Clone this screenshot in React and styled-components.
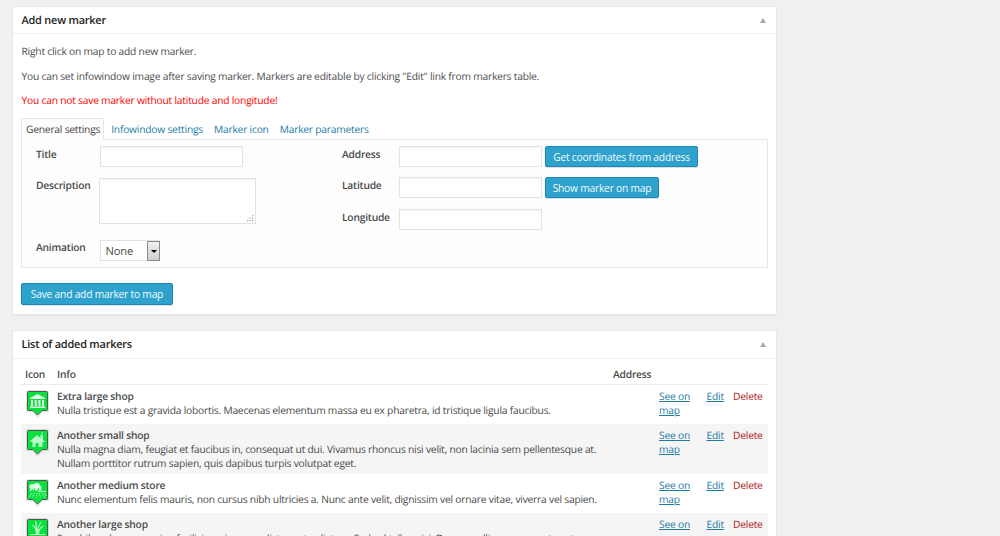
import React from "react";
import styled, { createGlobalStyle, css } from "styled-components";

const GlobalStyle = createGlobalStyle`
  html, body { margin: 0; height: 100%; overflow: hidden; }
  body {
    background: #f0f0f0;
    color: #4a4a4a;
    font: 10.25px/14px "Open Sans", sans-serif;
    letter-spacing: -0.216px;
    text-rendering: geometricPrecision;
  }
  *, *::before, *::after { box-sizing: border-box; }
`;

const Page = styled.main`
  display: flex;
  flex-direction: column;
  gap: 15px;
  width: 765px;
  height: 530px;
  overflow: hidden;
  margin: 6px 0 0 12px;
`;

const Panel = styled.section`
  flex: none;
  height: ${(p) => p.$height}px;
  background: #fff;
  border: 1px solid #e8e8e8;
  box-shadow: 0 1px 1px rgba(0, 0, 0, 0.03);
`;

const PanelHeader = styled.header`
  display: flex;
  align-items: center;
  justify-content: space-between;
  height: ${(p) => p.$height}px;
  padding: 0 10px 0 8.5px;
  border-bottom: 1px solid #f0f0f0;
`;

const PanelTitle = styled.h3`
  margin: 0;
  padding-top: 1px;
  color: #222;
  font-size: 10.95px;
  font-weight: 600;
`;

const Caret = styled.i`
  border: 3px solid transparent;
  border-top: 0;
  border-bottom: 5px solid #a6a6a6;
`;

const Intro = styled.div`
  display: flow-root;
  height: 84px;
  padding: 11px 8.5px 0;
`;

const Paragraph = styled.p`
  margin: 0 0 9.5px;
  line-height: 15px;
  color: ${(p) => (p.$warning ? "#f00" : "#4d4d4d")};
`;

const Tabs = styled.nav`
  display: flex;
  margin-left: 8px;
  height: 21px;
`;

const Tab = styled.a`
  padding: 4px 3px 0;
  margin-right: 3px;
  line-height: 14px;
  color: #1e7ba5;
  border: 1px solid transparent;
  border-bottom: 0;
  ${(p) =>
    p.$active &&
    css`
      padding-left: 4px;
      color: #444;
      background: #fdfdfd;
      border-color: #e5e5e5;
      margin-bottom: -1px;
      z-index: 1;
    `}
`;

const TabPanel = styled.div`
  display: grid;
  grid-template-columns: 306px 1fr;
  width: 747px;
  height: 129px;
  margin-left: 8px;
  padding: 6px 0 0 14px;
  background: #fdfdfd;
  border: 1px solid #e7e7e7;
`;

const Fields = styled.div`
  display: flex;
  flex-direction: column;
`;

const Field = styled.div`
  display: grid;
  grid-template-columns: ${(p) => p.$label}px auto auto;
  justify-content: start;
  align-items: start;
  height: ${(p) => p.$height}px;
`;

const Label = styled.label`
  padding-top: 2px;
  font-weight: 600;
  line-height: 14px;
`;

const Input = styled.input`
  width: 143px;
  height: 21px;
  margin: 0;
  background: #fff;
  border: 1px solid #e2e2e2;
  box-shadow: inset 0 1px 1px rgba(0, 0, 0, 0.04);
`;

const TextArea = styled.div`
  display: flex;
  align-items: flex-end;
  justify-content: flex-end;
  width: 157px;
  height: 46px;
  margin: 1px 0 0 -1px;
  padding: 1px;
  background: #fff;
  border: 1px solid #e2e2e2;
  box-shadow: inset 0 1px 1px rgba(0, 0, 0, 0.04);
`;

const Select = styled.div`
  display: flex;
  justify-content: space-between;
  width: 60px;
  height: 21px;
  margin-top: 1px;
  padding-left: 4.5px;
  font-size: 11.2px;
  letter-spacing: -0.2px;
  line-height: 21px;
  background: #fff;
  border: 1px solid #e2e2e2;
`;

const SelectArrow = styled.span`
  display: flex;
  align-items: center;
  justify-content: center;
  width: 13px;
  height: 20px;
  margin-right: -1px;
  background: linear-gradient(#f0f0f0, #cfcfcf);
  border: 1px solid #8a8a8a;

  &::after {
    content: "";
    border: 3px solid transparent;
    border-top-color: #000;
    border-bottom: 0;
  }
`;

const Button = styled.button`
  width: ${(p) => p.$width}px;
  height: ${(p) => p.$height || 21}px;
  margin: 0;
  padding: 0;
  color: #f2fafd;
  font: inherit;
  letter-spacing: inherit;
  line-height: 20px;
  text-align: center;
  white-space: nowrap;
  background: #2ea2cc;
  border: 1px solid #1b88b3;
  border-radius: 2px;
  box-shadow: 0 1px 0 rgba(0, 0, 0, 0.12);
`;

const InlineButton = styled(Button)`
  margin: 0 0 0 3px;
`;

const Actions = styled.div`
  padding: 15px 0 0 8px;
`;

const Table = styled.div`
  width: 747px;
  margin-left: 8px;
`;

const Row = styled.div`
  display: grid;
  grid-template-columns: 36px 556px 46px 47.5px 26.5px 1fr;
  height: ${(p) => p.$height}px;
  padding-top: 5px;
  background: ${(p) => (p.$striped ? "#f5f5f5" : "transparent")};
`;

const HeadRow = styled(Row)`
  padding: 8.5px 0 0 4px;
  grid-template-columns: 32px 556px 1fr;
  font-weight: 600;
  border-bottom: 1px solid #ececec;
`;

const IconCell = styled.div`
  padding-left: 5px;

  svg { display: block; }
`;

const Name = styled.div`
  font-weight: 600;
`;

const InfoText = styled.div`
  white-space: pre;
`;

const Link = styled.a`
  color: ${(p) => (p.$danger ? "#b01818" : "#1e7ba5")};
  text-decoration: ${(p) => (p.$danger ? "none" : "underline")};
`;

const glyphs = {
  bank: (
    <g fill="#e4ffe9">
      <path d="M4 8 11.5 4 19 8v1H4z" />
      <path d="M5 10h2v6H5zM8.7 10h2v6h-2zM12.4 10h2v6h-2zM16 10h2v6h-2zM4 16.4h15v1.6H4z" />
    </g>
  ),
  house: (
    <g fill="#baf9c8">
      <path d="m4 12 7-6 3.5 3V5.800H17V11l2 1.500-1 .8-1.500-.8V18h-4v-4h-3v4h-3v-5.500L5 13z" />
      <path d="m15.500 5 1.500-2" stroke="#baf9c8" />
    </g>
  ),
  farm: (
    <g fill="none" stroke="#dfffe6">
      <g fill="#dfffe6" stroke="none">
        <circle cx="6" cy="7.500" r="2.600" />
        <path d="m6.500 8.500 2-4 3.500-.7 3.500 4.200v3.500h-9z" />
        <path d="M4 10h1.500v2H4z" />
      </g>
      <path d="M7.500 9.500H9v2H7.500zM11.500 9.500H13v2h-1.500z" fill="#06e23c" stroke="none" />
      <path d="M12 12.500h8" strokeWidth=".8" />
      <path d="m6 14-3 4.500m5.500-4.500-2 4.500m4.500-4.500-.5 4.500m3-4.500.8 4.500m1.700-4.500 2.500 4.500m0-4.500 2 3" strokeWidth=".8" strokeDasharray="1.4 .6" />
    </g>
  ),
  grass: (
    <g fill="none" stroke="#baf9c8">
      <path d="M10.500 16c0-4-1-7-4-9m4.500 9c-.5-5-.5-9-1.500-13m2 13c0-6 1.500-9 3.500-12m-2.500 12c0-4 1.500-6 4.500-8" strokeWidth="1.200" />
      <path d="M4 16.500h15" />
    </g>
  ),
};

function MarkerIcon({ type }) {
  return (
    <svg width="24" height="30" viewBox="0 0 24 30">
      <path d="M2.500 1.500h18a1 1 0 0 1 1 1v18h-5.500l-4.500 5-4.500-5H1.500v-18a1 1 0 0 1 1-1z" fill="none" stroke="#000" strokeOpacity=".12" strokeWidth="3" />
      <path d="M2.500 1.500h18a1 1 0 0 1 1 1v17a1 1 0 0 1-1 1H16l-4.500 4.500L7 20.500H2.500a1 1 0 0 1-1-1v-17a1 1 0 0 1 1-1z" fill="#06e23c" stroke="#4c5a4f" />
      {glyphs[type]}
    </svg>
  );
}

const markers = [
  { icon: "bank", height: 39, name: "Extra large shop", text: "Nulla tristique est a gravida lobortis. Maecenas elementum massa eu ex pharetra, id tristique ligula faucibus." },
  { icon: "house", height: 50, name: "Another small shop", text: "Nulla magna diam, feugiat et faucibus in, consequat ut dui. Vivamus rhoncus nisi velit, non lacinia sem pellentesque at.\nNullam porttitor rutrum sapien, quis dapibus turpis volutpat eget." },
  { icon: "farm", height: 39, name: "Another medium store", text: "Nunc elementum felis mauris, non cursus nibh ultricies a. Nunc ante velit, dignissim vel ornare vitae, viverra vel sapien." },
  { icon: "grass", height: 50, name: "Another large shop", text: "Eros bibendum eu sapien facilisis, enim sem, dictum at a dictum. Sed vel tellus nisi. Donec mollis congue metus ut." },
];

export default function App() {
  return (
    <>
      <GlobalStyle />
      <Page>
        <Panel $height={309}>
          <PanelHeader $height={27}>
            <PanelTitle>Add new marker</PanelTitle>
            <Caret />
          </PanelHeader>
          <Intro>
            <Paragraph>Right click on map to add new marker.</Paragraph>
            <Paragraph>You can set infowindow image after saving marker. Markers are editable by clicking "Edit" link from markers table.</Paragraph>
            <Paragraph $warning>You can not save marker without latitude and longitude!</Paragraph>
          </Intro>
          <Tabs>
            <Tab $active>General settings</Tab>
            <Tab>Infowindow settings</Tab>
            <Tab>Marker icon</Tab>
            <Tab>Marker parameters</Tab>
          </Tabs>
          <TabPanel>
            <Fields>
              <Field $label={64} $height={31}><Label>Title</Label><Input /></Field>
              <Field $label={64} $height={62}>
                <Label>Description</Label>
                <TextArea>
                  <svg width="7" height="7" viewBox="0 0 7 7" fill="#aaa">
                    <path d="M5 0h1.300v1.300H5zM2.500 2.500h1.300v1.300H2.500zM5 2.500h1.300v1.300H5zM0 5h1.300v1.300H0zM2.500 5h1.300v1.300H2.500zM5 5h1.300v1.300H5z" />
                  </svg>
                </TextArea>
              </Field>
              <Field $label={64} $height={22}><Label>Animation</Label><Select>None<SelectArrow /></Select></Field>
            </Fields>
            <Fields>
              <Field $label={57} $height={31}><Label>Address</Label><Input /><InlineButton $width={153}>Get coordinates from address</InlineButton></Field>
              <Field $label={57} $height={32}><Label>Latitude</Label><Input /><InlineButton $width={114}>Show marker on map</InlineButton></Field>
              <Field $label={57} $height={22}><Label>Longitude</Label><Input /></Field>
            </Fields>
          </TabPanel>
          <Actions><Button $width={152} $height={22}>Save and add marker to map</Button></Actions>
        </Panel>
        <Panel $height={260}>
          <PanelHeader $height={28}>
            <PanelTitle>List of added markers</PanelTitle>
            <Caret />
          </PanelHeader>
          <Table>
            <HeadRow $height={26}><span>Icon</span><span>Info</span><span>Address</span></HeadRow>
            {markers.map((m, i) => (
              <Row key={m.name} $height={m.height} $striped={i % 2 === 1}>
                <IconCell><MarkerIcon type={m.icon} /></IconCell>
                <div><Name>{m.name}</Name><InfoText>{m.text}</InfoText></div>
                <span />
                <Link>See on<br />map</Link>
                <Link>Edit</Link>
                <Link $danger>Delete</Link>
              </Row>
            ))}
          </Table>
        </Panel>
      </Page>
    </>
  );
}
